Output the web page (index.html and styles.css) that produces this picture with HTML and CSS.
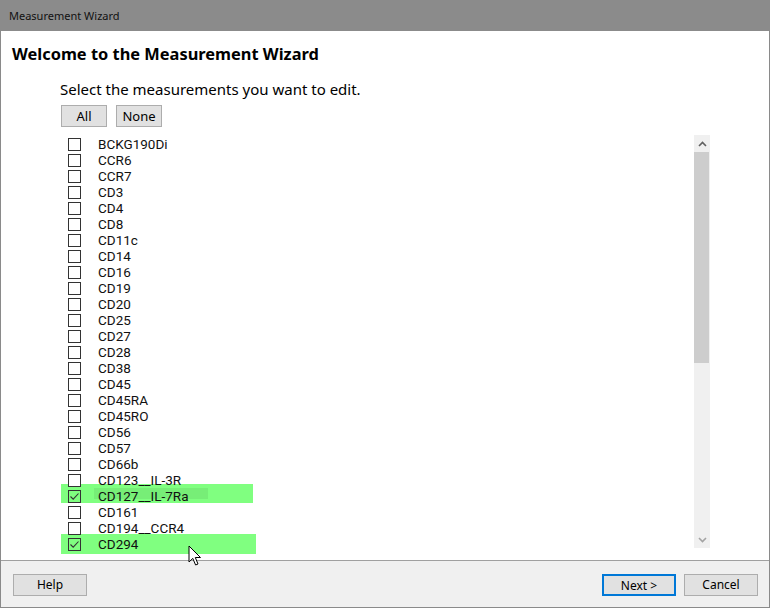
FILE: index.html
```html
<!DOCTYPE html>
<html>
<head>
<meta charset="utf-8">
<link rel="stylesheet" href="styles.css">
</head>
<body>
<div class="window">
  <div class="titlebar">Measurement Wizard</div>
  <div class="content">
    <h1 class="heading">Welcome to the Measurement Wizard</h1>
    <div class="body">
      <p class="prompt">Select the measurements you want to edit.</p>
      <div class="toggles">
        <button class="btn small">All</button>
        <button class="btn small none">None</button>
      </div>
      <div class="listbox">
        <ul class="items">
          <li class="item"><span class="cb"></span><span class="label">BCKG190Di</span></li>
          <li class="item"><span class="cb"></span><span class="label">CCR6</span></li>
          <li class="item"><span class="cb"></span><span class="label">CCR7</span></li>
          <li class="item"><span class="cb"></span><span class="label">CD3</span></li>
          <li class="item"><span class="cb"></span><span class="label">CD4</span></li>
          <li class="item"><span class="cb"></span><span class="label">CD8</span></li>
          <li class="item"><span class="cb"></span><span class="label">CD11c</span></li>
          <li class="item"><span class="cb"></span><span class="label">CD14</span></li>
          <li class="item"><span class="cb"></span><span class="label">CD16</span></li>
          <li class="item"><span class="cb"></span><span class="label">CD19</span></li>
          <li class="item"><span class="cb"></span><span class="label">CD20</span></li>
          <li class="item"><span class="cb"></span><span class="label">CD25</span></li>
          <li class="item"><span class="cb"></span><span class="label">CD27</span></li>
          <li class="item"><span class="cb"></span><span class="label">CD28</span></li>
          <li class="item"><span class="cb"></span><span class="label">CD38</span></li>
          <li class="item"><span class="cb"></span><span class="label">CD45</span></li>
          <li class="item"><span class="cb"></span><span class="label">CD45RA</span></li>
          <li class="item"><span class="cb"></span><span class="label">CD45RO</span></li>
          <li class="item"><span class="cb"></span><span class="label">CD56</span></li>
          <li class="item"><span class="cb"></span><span class="label">CD57</span></li>
          <li class="item"><span class="cb"></span><span class="label">CD66b</span></li>
          <li class="item"><span class="cb"></span><span class="label">CD123__IL-3R</span></li>
          <li class="item hl hl-a"><span class="cb checked"><svg viewBox="0 0 13 13" width="13" height="13"><path d="M2.5 6.5 L5.2 9.2 L10.5 3.5" fill="none" stroke="#333" stroke-width="1.1"/></svg></span><span class="focusbox"></span><span class="label">CD127__IL-7Ra</span></li>
          <li class="item"><span class="cb"></span><span class="label">CD161</span></li>
          <li class="item"><span class="cb"></span><span class="label">CD194__CCR4</span></li>
          <li class="item hl hl-b"><span class="cb checked"><svg viewBox="0 0 13 13" width="13" height="13"><path d="M2.5 6.5 L5.2 9.2 L10.5 3.5" fill="none" stroke="#333" stroke-width="1.1"/></svg></span><span class="label">CD294</span></li>
        </ul>
        <div class="scrollbar">
          <div class="arrow up"><svg viewBox="0 0 9 6" width="9" height="6"><path d="M1 5 L4.5 1.5 L8 5" fill="none" stroke="#606060" stroke-width="1.6"/></svg></div>
          <div class="thumb"></div>
          <div class="track"></div>
          <div class="arrow down"><svg viewBox="0 0 9 6" width="9" height="6"><path d="M1 1 L4.5 4.5 L8 1" fill="none" stroke="#a3a3a3" stroke-width="1.6"/></svg></div>
        </div>
      </div>
    </div>
  </div>
  <div class="footer">
    <button class="btn">Help</button>
    <div class="spacer"></div>
    <button class="btn default">Next &gt;</button>
    <button class="btn">Cancel</button>
  </div>
  <svg class="cursor" viewBox="0 0 14 22" width="14" height="22"><path d="M1 1 L1 17 L4.8 13.4 L7.6 20 L10 19 L7.3 12.5 L12.5 12.5 Z" fill="#fff" stroke="#000" stroke-width="1" stroke-linejoin="miter"/></svg>
</div>
</body>
</html>
```

FILE: styles.css
```css
* { box-sizing: border-box; }
html, body { margin: 0; padding: 0; }
body {
  width: 770px;
  height: 608px;
  background: #ffffff;
  font-family: "Noto Sans", "Open Sans", sans-serif;
  color: #000;
}
.window {
  position: relative;
  width: 770px;
  height: 608px;
  display: flex;
  flex-direction: column;
  border-left: 1px solid #8a8a8a;
  border-right: 1px solid #8a8a8a;
  border-bottom: 1px solid #8a8a8a;
  background: #fff;
}
.titlebar {
  height: 31px;
  background: #8b8b8b;
  margin: 0 -1px;
  padding-left: 9px;
  font-size: 11px;
  line-height: 31px;
  color: #111;
}
.content {
  flex: 1;
  display: flex;
  flex-direction: column;
  padding: 0 0 0 11px;
}
.heading {
  margin: 12px 0 0 0;
  font-size: 16.4px;
  font-weight: bold;
  line-height: 22px;
}
.body {
  padding-left: 48px;
  display: flex;
  flex-direction: column;
}
.prompt {
  margin: 14px 0 0 0;
  font-size: 15px;
  line-height: 20px;
}
.toggles {
  display: flex;
  gap: 9px;
  margin-top: 6px;
  padding-left: 1px;
}
.btn {
  font-family: "Noto Sans", "Open Sans", sans-serif;
  font-size: 12px;
  height: 22px;
  width: 74px;
  background: #e1e1e1;
  border: 1px solid #adadad;
  color: #000;
  padding: 0;
  line-height: 20px;
}
.btn.small {
  width: 46px;
  font-size: 13px;
}
.listbox {
  margin-top: 8px;
  display: flex;
  width: 650px;
  height: 414px;
}
.items {
  list-style: none;
  margin: 0;
  padding: 1px 0 0 0;
  flex: 1;
}
.item {
  position: relative;
  height: 16px;
  display: flex;
  align-items: center;
  font-family: Roboto, "Noto Sans", sans-serif;
  font-size: 13.5px;
}
.item.hl::before {
  content: "";
  position: absolute;
  left: 1px;
  background: #80ff80;
  z-index: 0;
}
.item.hl-a::before { top: -4px; height: 19px; width: 192px; }
.item.hl-b::before { top: -2px; height: 20px; width: 195px; }
.cb {
  position: relative;
  z-index: 1;
  width: 13px;
  height: 13px;
  border: 1px solid #333;
  margin-left: 8px;
  background: #fff;
  display: block;
}
.cb.checked { background: transparent; }
.cb svg { position: absolute; left: -1px; top: -1px; }
.focusbox {
  position: absolute;
  left: 34px;
  top: 0;
  width: 114px;
  height: 11px;
  background: #77ee77;
  z-index: 0;
}
.label {
  position: relative;
  z-index: 1;
  margin-left: 17px;
  line-height: 16px;
  color: #111;
}
.scrollbar {
  width: 16px;
  display: flex;
  flex-direction: column;
  background: #f0f0f0;
  height: 413px;
}
.arrow {
  height: 17px;
  display: flex;
  align-items: center;
  justify-content: center;
}
.thumb {
  height: 211px;
  background: #cdcdcd;
  margin: 0 1px 0 0;
}
.track { flex: 1; }
.footer {
  height: 47px;
  background: #f0f0f0;
  border-top: 1px solid #a0a0a0;
  display: flex;
  align-items: flex-start;
  gap: 8px;
  padding: 13px 11px 0 12px;
}
.spacer { flex: 1; }
.btn.default {
  border: 2px solid #0078d7;
}
.cursor {
  position: absolute;
  left: 187px;
  top: 545px;
}
```
